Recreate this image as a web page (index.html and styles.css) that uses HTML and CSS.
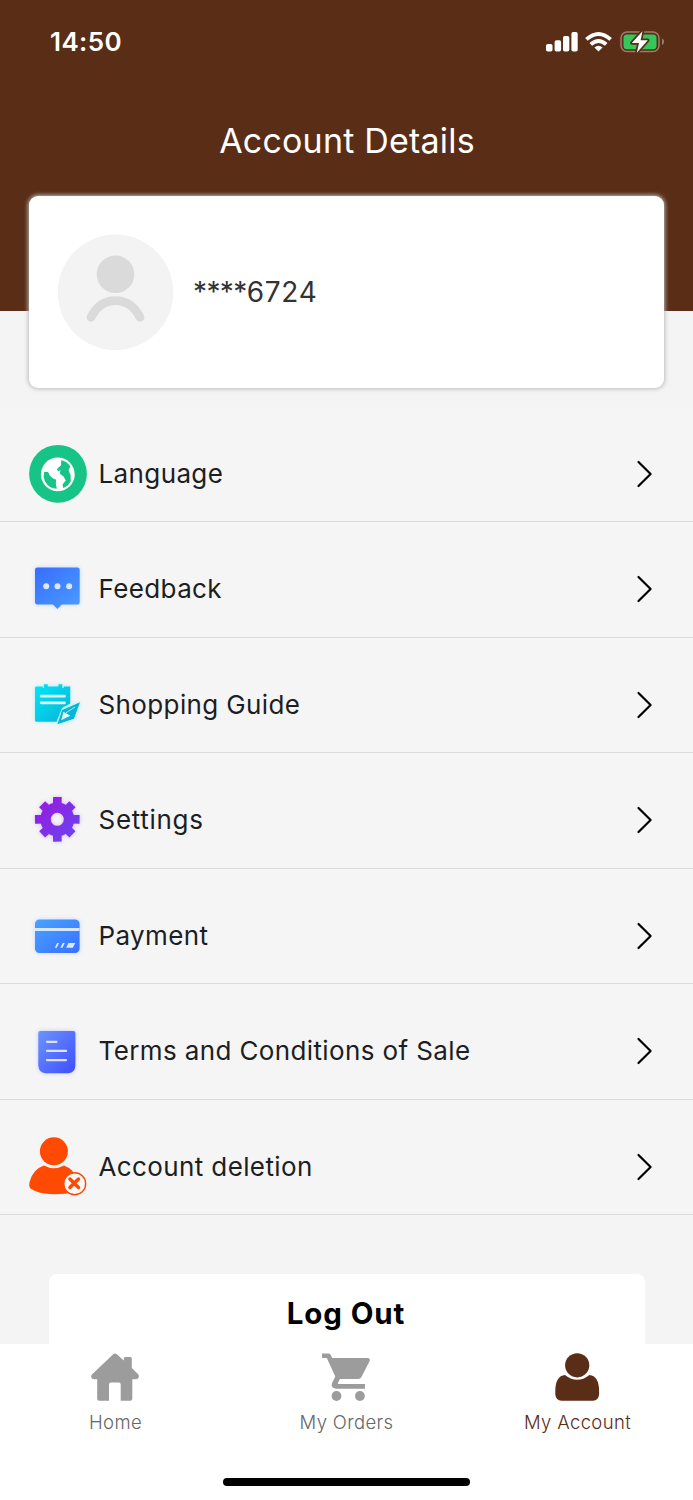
FILE: index.html
```html
<!DOCTYPE html>
<html lang="en">
<head>
<meta charset="utf-8">
<title>Account Details</title>
<link rel="stylesheet" href="styles.css">
</head>
<body>
<div class="screen">
  <header class="header">
    <div class="status">
      <span class="time">14:50</span>
      <svg class="status-icons" width="120" height="24" viewBox="0 0 120 24">
        <g fill="#fff">
          <rect x="2" y="14" width="6.5" height="7.5" rx="1.8"/>
          <rect x="10.6" y="10.2" width="6.5" height="11.3" rx="1.8"/>
          <rect x="19" y="6" width="6.3" height="15.5" rx="1.8"/>
          <rect x="27.4" y="2" width="6.3" height="19.5" rx="1.8"/>
          <path d="M54.5 21.5 L50.4 17.4 Q54.5 14.2 58.6 17.4 Z"/>
        </g>
        <g fill="none" stroke="#fff" stroke-width="3.9">
          <path d="M46.8 14.4 Q54.5 7.7 62.2 14.4"/>
          <path d="M42.4 9.4 Q54.5 -1.5 66.6 9.4"/>
        </g>
        <rect x="77" y="2" width="38" height="19.5" rx="6" fill="none" stroke="#9b7d6c" stroke-width="1.5"/>
        <path d="M118 8.2 Q120.4 9.8 120 12 Q120 14 118 15.3Z" fill="#9b7d6c"/>
        <rect x="79.5" y="4.4" width="33" height="14.8" rx="3.5" fill="#34c759"/>
        <path d="M98.5 1.2 L87.8 13 H95 L92.8 22.7 L103.8 10.3 H96.6 Z" fill="#fff" stroke="#5a2d16" stroke-width="3.4" stroke-linejoin="round" paint-order="stroke"/>
      </svg>
    </div>
    <h1 class="title">Account Details</h1>
  </header>

  <section class="card">
    <svg class="avatar" width="116" height="116" viewBox="0 0 116 116">
      <circle cx="57.5" cy="58.3" r="57.8" fill="#f3f3f3"/>
      <circle cx="57.5" cy="40.3" r="18.8" fill="#dadada"/>
      <path d="M33 83.3 Q41.5 66.6 57.5 66.6 T82 83.3" fill="none" stroke="#dadada" stroke-width="8.8" stroke-linecap="round"/>
    </svg>
    <span class="phone"><span class="mask">****</span>6724</span>
  </section>

  <main class="menu">
    <div class="row">
      <svg class="icon" viewBox="0 0 58 58">
        <circle cx="29" cy="28.8" r="28.9" fill="#16c487"/>
        <circle cx="28.8" cy="29.4" r="16.9" fill="#fff"/>
        <path d="M32.2 15.2 Q38.2 16.3 41.3 21.4 L39.6 25.6 L41.6 30.3 L41.8 36.2 Q38.8 41.5 34.2 43.1 L33.5 39.6 L36.8 35.4 L34.6 31.5 L30.8 28.8 L31.4 25 L29 26.5 L28 24 L32 20.2 Z M15.1 26.9 L19 27.1 L21 30.8 L23.8 33.2 L27.2 34.7 L26.8 38.2 L27.8 43.8 Q20 43.4 16 36.5 Q13.8 31.7 15.1 26.9 Z" fill="#16c487"/>
      </svg>
      <span class="label">Language</span>
      <svg class="chevron" viewBox="0 0 18 28"><path d="M2.5 2 L14.6 14 L2.5 26"/></svg>
    </div>
    <div class="row">
      <svg class="icon glow-blue" viewBox="0 0 58 58">
        <defs><linearGradient id="chat" x1="0" y1="0" x2="1" y2="1"><stop stop-color="#376dff"/><stop offset="1" stop-color="#4a9cff"/></linearGradient></defs>
        <path d="M8.2 7.6 H48.5 Q50.7 7.6 50.7 9.8 V42.3 Q50.7 44.5 48.5 44.5 H32.8 L28.4 49 L24 44.5 H8.2 Q6 44.5 6 42.3 V9.8 Q6 7.6 8.2 7.6Z" fill="url(#chat)"/>
        <g fill="#dbe7ff"><circle cx="17.2" cy="26.2" r="3"/><circle cx="28.5" cy="26.2" r="3"/><circle cx="40.1" cy="26.2" r="3"/></g>
      </svg>
      <span class="label">Feedback</span>
      <svg class="chevron" viewBox="0 0 18 28"><path d="M2.5 2 L14.6 14 L2.5 26"/></svg>
    </div>
    <div class="row">
      <svg class="icon glow-cyan" viewBox="0 0 58 58">
        <defs><linearGradient id="note" x1="0" y1="0" x2="1" y2="1"><stop stop-color="#00e5f8"/><stop offset="1" stop-color="#08b4d6"/></linearGradient></defs>
        <path d="M7.5 10.5 H13.5 Q13.8 12.5 15 12 V8.3 H18.8 V10.5 H29.5 V8.3 H33.3 V12 Q34.8 12.5 35 10.5 H41.2 V27.5 L33 32 L27.5 45.8 H7.5 Q6 45.8 6 44.3 V12 Q6 10.5 7.5 10.5Z" fill="url(#note)"/>
        <path d="M12.2 20.2 H35.5 M12.2 26.8 H35.5" stroke="#d9fbff" stroke-width="2.8" stroke-linecap="round"/>
        <path d="M51 26.3 L45 42.7 L28.4 48.2 L33 34 Z" fill="#08b6d8" stroke="#e6fbff" stroke-width="1" paint-order="stroke"/>
        <path d="M34.4 35.8 L41.3 39.8 L32.2 44.2 Z" fill="#e4f8fc"/>
        <path d="M37 36.8 L46 31" stroke="#e4f8fc" stroke-width=".7"/>
      </svg>
      <span class="label">Shopping Guide</span>
      <svg class="chevron" viewBox="0 0 18 28"><path d="M2.5 2 L14.6 14 L2.5 26"/></svg>
    </div>
    <div class="row">
      <svg class="icon glow-purple" viewBox="0 0 58 58">
        <defs><linearGradient id="gear" gradientUnits="userSpaceOnUse" x1="12" y1="10" x2="43" y2="48"><stop stop-color="#961bdd"/><stop offset="1" stop-color="#6c43ef"/></linearGradient></defs>
        <g fill="none" stroke="url(#gear)">
          <circle cx="28.3" cy="28.3" r="11.7" stroke-width="10.4"/>
          <path stroke-width="8.6" d="M28.4 6 L28.2 17 M28.4 50.6 L28.2 39 M6 28.4 L17 28.2 M50.6 28.4 L39 28.2"/>
          <path stroke-width="8.6" d="M13.2 13.2 L20 20 M43.4 43.4 L37 37 M13.2 43.4 L20 37 M43.4 13.2 L37 20"/>
        </g>
      </svg>
      <span class="label wide">Settings</span>
      <svg class="chevron" viewBox="0 0 18 28"><path d="M2.5 2 L14.6 14 L2.5 26"/></svg>
    </div>
    <div class="row">
      <svg class="icon glow-blue" viewBox="0 0 58 58">
        <defs><linearGradient id="pay" x1="0" y1="0" x2="1" y2="1"><stop stop-color="#48a4ff"/><stop offset="1" stop-color="#3970ff"/></linearGradient></defs>
        <rect x="6" y="12.4" width="44.6" height="33.6" rx="4.5" fill="url(#pay)"/>
        <path d="M6 21 H50.6 V24 H6Z M28.1 36 H30 L27.8 40.8 H25.8Z M33.7 36 H35.8 L33.5 40.8 H31.3Z M39.5 36 H46.3 L43.8 40.8 H37.1Z" fill="#d6e7ff"/>
      </svg>
      <span class="label">Payment</span>
      <svg class="chevron" viewBox="0 0 18 28"><path d="M2.5 2 L14.6 14 L2.5 26"/></svg>
    </div>
    <div class="row">
      <svg class="icon glow-indigo" viewBox="0 0 58 58">
        <defs><linearGradient id="doc" x1="0" y1="0" x2="1" y2="1"><stop stop-color="#6a94ff"/><stop offset="1" stop-color="#414dff"/></linearGradient></defs>
        <path d="M11.3 8.9 H44.4 Q46.4 8.9 46.4 10.9 V43.5 Q46 50.6 39.5 51.2 H16.5 Q9.8 50.6 9.3 43.5 V10.9 Q9.3 8.9 11.3 8.9Z" fill="url(#doc)"/>
        <path d="M18 19.8 H27.5 M18 28.9 H37 M18 38.1 H37" stroke="#dce3ff" stroke-width="2.3" stroke-linecap="round"/>
      </svg>
      <span class="label">Terms and Conditions of Sale</span>
      <svg class="chevron" viewBox="0 0 18 28"><path d="M2.5 2 L14.6 14 L2.5 26"/></svg>
    </div>
    <div class="row">
      <svg class="icon" viewBox="0 0 58 58">
        <g fill="#ff4a03">
          <circle cx="24.9" cy="13.3" r="14"/>
          <path d="M14.8 27.6 Q24.9 33 35 27.6 Q44 31 48 40 L46 54 Q36 56.3 25 56.2 Q9 56 1.5 50.5 Q-.5 48.5 .7 43.5 Q4 31.5 14.8 27.6Z"/>
        </g>
        <circle cx="45.7" cy="45.7" r="11" fill="#f7f7f7" stroke="#ff4a03" stroke-width="1.4"/>
        <path d="M40.9 41 L49.5 49.6 M49.5 41 L40.9 49.6" stroke="#ff4a03" stroke-width="3.5" stroke-linecap="round"/>
      </svg>
      <span class="label">Account deletion</span>
      <svg class="chevron" viewBox="0 0 18 28"><path d="M2.5 2 L14.6 14 L2.5 26"/></svg>
    </div>
    <button class="logout">Log Out</button>
  </main>

  <nav class="nav">
    <div class="tabs">
      <div class="tab">
        <svg width="48" height="48" viewBox="0 0 48 48" fill="#9c9c9c"><path d="M22.2 1.2 Q24 -.4 25.8 1.2 L32.8 7.6 V5.5 Q32.8 4 34.3 4 H39.3 Q40.8 4 40.8 5.5 V15 L47 20.9 Q48.5 22.6 47.5 24.8 Q47 26.2 45 26.2 H41.3 V45.7 Q41.3 47.7 39.3 47.7 H29.7 V31.5 Q29.7 29.5 27.7 29.5 H20 Q18 29.5 18 31.5 V47.7 H8.2 Q6.2 47.7 6.2 45.7 V26.2 H2.8 Q1 26.2 .4 24.6 Q-.4 22.7 1.2 21.2 Z"/></svg>
        <span>Home</span>
      </div>
      <div class="tab">
        <svg width="48" height="48" viewBox="0 0 48 48" fill="#9c9c9c"><path d="M0 .4 H6.5 Q8 .4 8.6 1.7 L10.3 5.1 H45.8 Q48.7 5.5 47.5 8.2 L39.6 23.7 Q38.5 25.9 36 25.9 H18 L15.8 29.9 Q15.5 31.1 16.9 31.1 H43 V35.8 H14.4 Q7.8 34.8 10.4 29.2 L13.3 23.5 L4.8 5.1 H0Z"/><circle cx="14.5" cy="43" r="4.9"/><circle cx="37.9" cy="43" r="4.9"/></svg>
        <span>My Orders</span>
      </div>
      <div class="tab active">
        <svg width="48" height="48" viewBox="0 0 48 48" fill="#5a2d16"><circle cx="24.2" cy="12.3" r="12.1"/><path d="M12 21.9 Q24.2 31.7 36.4 21.9 Q46 22.8 46.1 38 V41.5 Q45.5 47.6 40 47.7 H8.5 Q2.9 47.6 2.3 41.5 V38 Q2.4 22.8 12 21.9Z"/></svg>
        <span>My Account</span>
      </div>
    </div>
    <div class="indicator"></div>
  </nav>
</div>
</body>
</html>
```
FILE: styles.css
```css
* { box-sizing: border-box; }
body { margin: 0; font-family: Inter, "Liberation Sans", sans-serif; }
.screen { width: 693px; height: 1500px; display: flex; flex-direction: column; overflow: hidden; background: #f4f4f4; }
.header { height: 311px; flex: none; background: #5a2d16; color: #fff; }
.status { height: 83px; padding: 0 29px 0 50px; display: flex; align-items: center; justify-content: space-between; }
.time { font-size: 26px; font-weight: 600; letter-spacing: .4px; }
.title { margin: 36px 0 0; padding-left: 1px; font-size: 34px; line-height: 44px; font-weight: 400; letter-spacing: .2px; text-align: center; }
.card { position: relative; flex: none; height: 192px; margin: -115px 29px 0; padding: 0 29px; border-radius: 9px; background: #fff; box-shadow: 0 0 4px 1px #bbb; display: flex; align-items: center; gap: 19px; }
.phone { font-size: 28px; font-weight: 400; color: #333; letter-spacing: .7px; }
.mask { letter-spacing: -.6px; }
.menu { flex: 1; min-height: 0; overflow: hidden; padding-top: 18.5px; }
.row { height: 115.5px; padding: 20px 39px 0 29px; display: flex; align-items: center; border-bottom: 1.5px solid #dadada; background: #f5f5f5; }
.icon { width: 58px; height: 58px; flex: none; overflow: visible; }
.glow-blue { filter: drop-shadow(0 0 2px #4a90ff50); }
.glow-cyan { filter: drop-shadow(0 0 2px #00dff050); }
.glow-purple { filter: drop-shadow(0 0 2px #8a30ff50); }
.glow-indigo { filter: drop-shadow(0 0 2px #5468ff50); }
.label { flex: 1; margin-left: 11.5px; padding-bottom: 1px; font-size: 26px; font-weight: 400; color: #1c1e22; letter-spacing: .38px; white-space: nowrap; }
.wide { letter-spacing: .7px; }
.chevron { width: 18px; height: 28px; fill: none; stroke: #000; stroke-width: 2.2; stroke-linecap: round; stroke-linejoin: round; }
.logout { display: block; width: 596px; height: 100px; margin: 59px 0 0 48.5px; padding: 0 1px 22px 0; border: 0; border-radius: 8px; background: #fff; color: #000; font: 700 29.5px Inter, sans-serif; letter-spacing: .9px; }
.nav { flex: none; height: 156px; background: #fff; display: flex; flex-direction: column; align-items: center; }
.tabs { width: 100%; height: 134px; padding: 9px 0 0; display: grid; grid-template-columns: repeat(3, 1fr); }
.tab { display: flex; flex-direction: column; align-items: center; gap: 9px; color: #666; font-size: 18.5px; font-weight: 300; line-height: 24px; letter-spacing: .35px; }
.tab svg { margin-left: -1px; }
.active { color: #5a2d16; }
.indicator { width: 247px; height: 8px; border-radius: 4px; background: #000; }
```
